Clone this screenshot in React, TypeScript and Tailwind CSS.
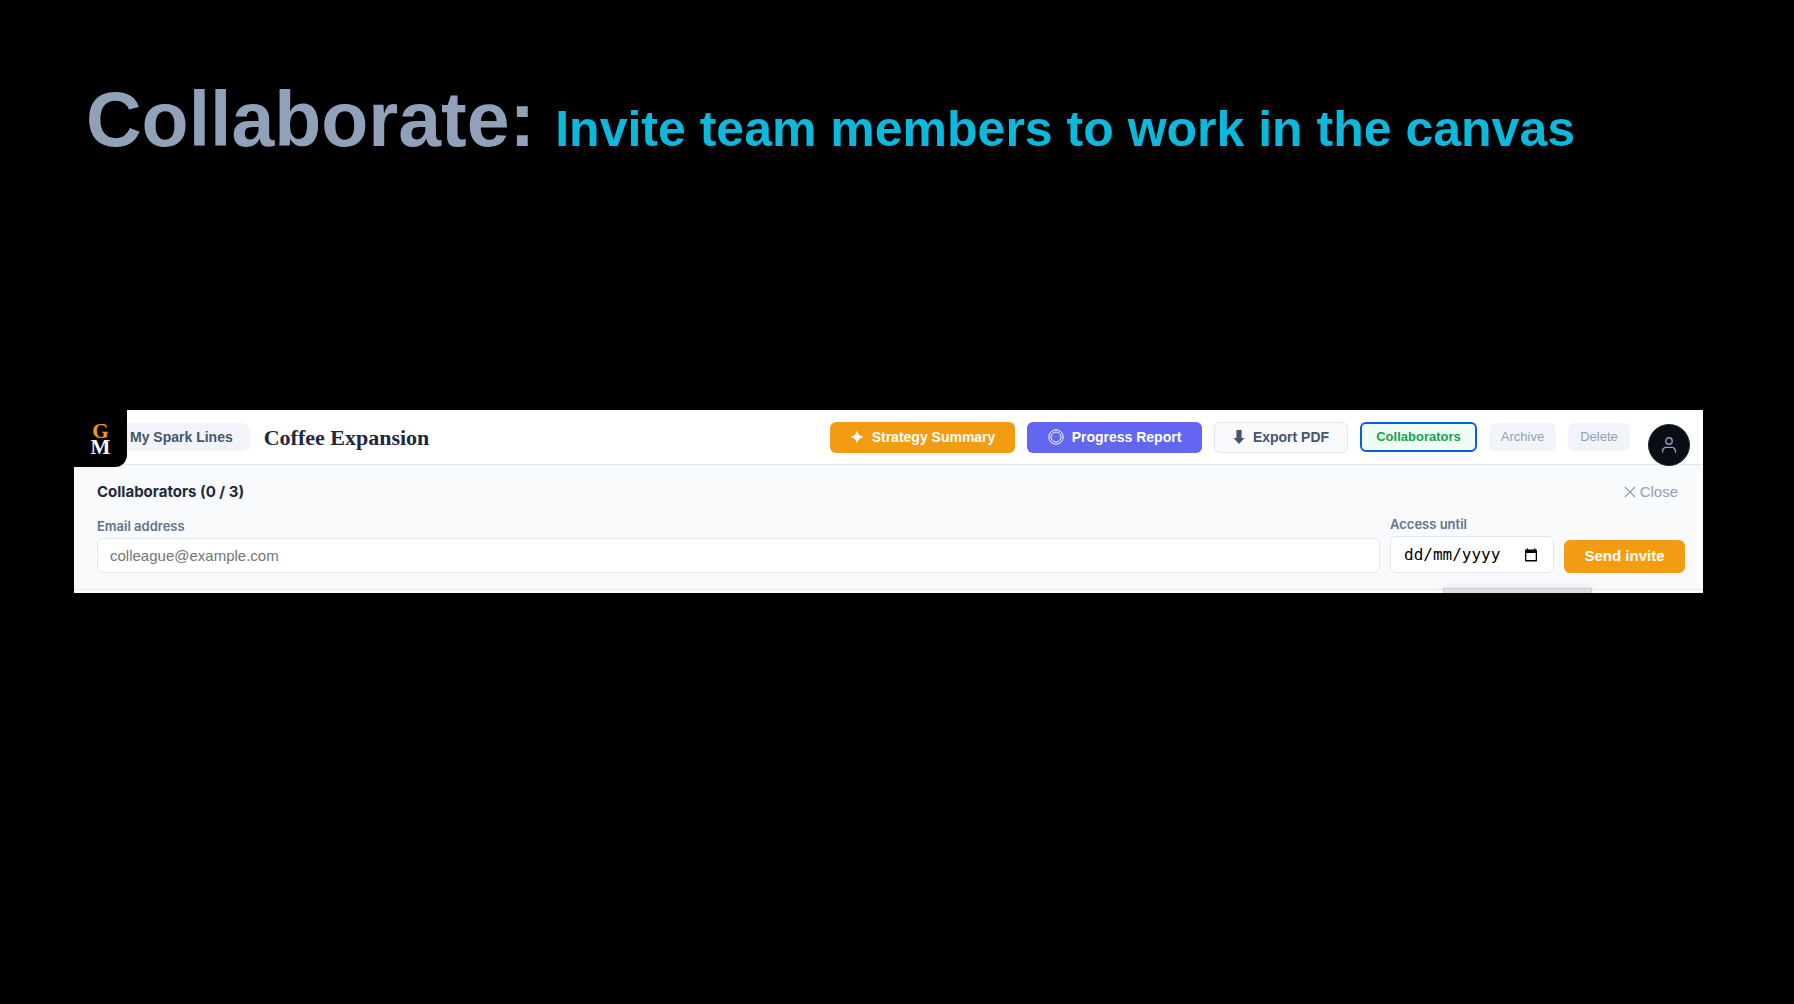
function Sparkle() {
  return (
    <svg viewBox="0 0 14 14" className="size-[14px]" fill="currentColor" aria-hidden="true">
      <path d="M7 0.3C8 4.4 9.6 6 13.6 7C9.6 8 8 9.6 7 13.7C6 9.6 4.4 8 0.4 7C4.4 6 6 4.4 7 0.3Z" />
    </svg>
  );
}

function Rings() {
  return (
    <svg viewBox="0 0 16 16" className="size-4" fill="none" stroke="currentColor" aria-hidden="true">
      <circle cx="8" cy="8" r="7.2" />
      <circle cx="8" cy="8" r="5" />
    </svg>
  );
}

function DownArrow() {
  return (
    <svg viewBox="0 0 12 14" className="h-[14px] w-3" fill="currentColor" aria-hidden="true">
      <path d="M3.4 0H8.6V8H11.6L6 14L0.4 8H3.4Z" />
    </svg>
  );
}

function Person() {
  return (
    <svg viewBox="0 0 16 16" className="size-4" fill="none" stroke="currentColor" strokeWidth="1.4" strokeLinecap="round" aria-hidden="true">
      <circle cx="8" cy="4" r="3.2" />
      <path d="M1.6 15V13.8A3.4 3.4 0 0 1 5 10.4H11A3.4 3.4 0 0 1 14.4 13.8V15" />
    </svg>
  );
}

function Calendar() {
  return (
    <svg viewBox="0 0 14 14" className="size-[14px]" aria-hidden="true">
      <path
        fill="currentColor"
        fillRule="evenodd"
        d="M2.6 0.4H4V1.6H10V0.4H11.4V1.6H12C12.6 1.6 13 2 13 2.6V12.4C13 13 12.6 13.4 12 13.4H2C1.4 13.4 1 13 1 12.4V2.6C1 2 1.4 1.6 2 1.6H2.6ZM2.3 5V12.1H11.7V5Z"
      />
    </svg>
  );
}

export default function App() {
  return (
    <main className="min-h-screen bg-black pt-[75px] pr-[91px] pl-[74px] font-['Liberation_Sans',Arial,sans-serif]">
      <h1 className="ml-3 flex h-[88px] items-baseline gap-5 leading-[88px] font-bold whitespace-nowrap">
        <span className="text-[77px] text-slate-400">Collaborate:</span>
        <span className="text-[50px] text-[#0cb8dc]">Invite team members to work in the canvas</span>
      </h1>

      <section className="relative mt-[247px] overflow-hidden bg-white">
        <header className="flex h-[55px] items-center border-b border-slate-200 pr-[73px]">
          <a
            href="#home"
            aria-label="GM home"
            className="z-10 -mb-[2px] flex h-[57px] w-[53px] shrink-0 flex-col items-center justify-center self-start rounded-br-xl bg-black pt-px font-['Liberation_Serif',serif] text-[21px] leading-4 font-bold"
          >
            <span className="text-[#f59e0b]">G</span>
            <span className="text-white">M</span>
          </a>
          <button className="-ml-1 h-7 rounded-r-lg bg-slate-100 pr-[17px] pl-[7px] text-sm font-bold whitespace-nowrap text-slate-600">
            My Spark Lines
          </button>
          <h2 className="ml-[14px] font-['Liberation_Serif',serif] text-[22px] font-bold whitespace-nowrap text-slate-800">
            Coffee Expansion
          </h2>
          <div className="ml-auto flex items-center gap-3 text-sm font-bold whitespace-nowrap">
            <button className="flex h-[31px] w-[185px] items-center justify-center gap-2 rounded-md bg-[#f39c12] text-white">
              <Sparkle />
              Strategy Summary
            </button>
            <button className="flex h-[31px] w-[175px] items-center justify-center gap-2 rounded-md bg-[#6366f1] text-white">
              <Rings />
              Progress Report
            </button>
            <button className="flex h-[31px] w-[134px] items-center justify-center gap-2 rounded-md border border-slate-200 bg-slate-50 text-slate-600">
              <DownArrow />
              Export PDF
            </button>
            <button className="h-[30px] w-[117px] rounded-md border-2 border-[#0b5ed7] bg-[#f0fdf4] text-[13px] text-[#16a34a]">
              Collaborators
            </button>
            <button className="h-7 w-[67px] rounded-md bg-slate-100 text-[13px] font-normal text-slate-400">Archive</button>
            <button className="h-7 w-[62px] rounded-md bg-slate-100 text-[13px] font-normal text-slate-400">Delete</button>
          </div>
        </header>

        <button
          aria-label="Account"
          className="absolute top-[14px] right-[13px] flex size-[42px] items-center justify-center rounded-full border border-slate-800 bg-[#0a0d14] text-slate-400"
        >
          <Person />
        </button>

        <div className="border-b border-slate-200 bg-slate-50 pt-[17px] pr-[18px] pb-4 pl-[23px]">
          <div className="flex h-5 items-center justify-between pr-[7px]">
            <h3 className="font-['Inter',sans-serif] text-[15px] leading-5 font-bold text-slate-800">Collaborators (0 / 3)</h3>
            <button className="flex items-center gap-1 text-[15px] leading-5 text-slate-400">
              <svg viewBox="0 0 12 12" className="size-3" fill="none" stroke="currentColor" strokeWidth="1.3" aria-hidden="true">
                <path d="M1 1L11 11M11 1L1 11" />
              </svg>
              Close
            </button>
          </div>
          <form className="mt-[14px] flex items-end gap-[10px]" onSubmit={(e) => e.preventDefault()}>
            <div className="flex flex-1 flex-col gap-1">
              <label htmlFor="email" className="font-['Inter',sans-serif] text-[13px] leading-4 font-semibold text-slate-500">
                Email address
              </label>
              <input
                id="email"
                type="email"
                placeholder="colleague@example.com"
                className="h-[35px] w-full rounded-md border border-slate-200 bg-white px-3 text-[15px] placeholder:text-[#757575]"
              />
            </div>
            <div className="flex w-[164px] flex-col gap-1">
              <label htmlFor="until" className="font-['Inter',sans-serif] text-[13px] leading-4 font-semibold text-slate-500">
                Access until
              </label>
              <div className="flex h-[37px] items-center rounded-md border border-slate-200 bg-white pr-[15px] pl-[13px]">
                <input
                  id="until"
                  type="text"
                  placeholder="dd/mm/yyyy"
                  className="w-full min-w-0 flex-1 bg-transparent font-['DejaVu_Sans_Mono',monospace] text-base leading-5 placeholder:text-black"
                />
                <button type="button" aria-label="Open calendar" className="text-black">
                  <Calendar />
                </button>
              </div>
            </div>
            <button type="submit" className="h-[33px] w-[121px] rounded-md bg-[#f39c12] text-[15px] font-bold text-white">
              Send invite
            </button>
          </form>
        </div>
        <div className="h-[3px] bg-white" />
        <div className="absolute right-[111px] bottom-0 h-[5px] w-[149px] border border-b-0 border-[#c9ccd3] bg-[#dcdee3] shadow-[0_0_8px_rgba(0,0,0,0.15)]" />
      </section>
    </main>
  );
}
